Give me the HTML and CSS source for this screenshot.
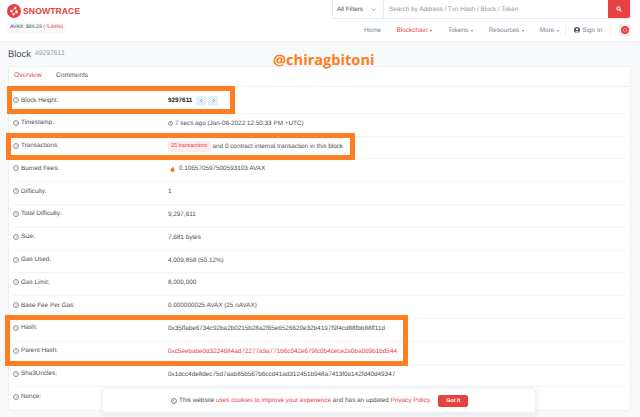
FILE: index.html
```html
<!DOCTYPE html>
<html lang="en">
<head>
<meta charset="utf-8">
<title>Block 9297611</title>
<link rel="stylesheet" href="styles.css">
</head>
<body>
<header class="top">
  <div class="brand">
    <div class="logo">
      <svg class="logo-mark" viewBox="0 0 16 16" width="14" height="14"><circle cx="8" cy="8" r="8" fill="#e84142"/><g fill="#fff"><circle cx="5" cy="8" r="1.5"/><circle cx="9.500" cy="4.500" r="1.300"/><circle cx="11" cy="9" r="1.500"/><circle cx="7.500" cy="12" r="1.200"/></g><path d="M5 8 9.500 4.500 11 9 7.500 12Z" fill="none" stroke="#fff" stroke-width=".7"/></svg>
      <span class="logo-text">SNOWTRACE</span>
    </div>
    <div class="price">AVAX: <b>$86.29</b> <span class="down">(-5.84%)</span></div>
  </div>
  <div class="top-right">
    <div class="search">
      <div class="filter"><span>All Filters</span><svg viewBox="0 0 8 8" width="5" height="5"><path d="M1 2.500 4 5.500 7 2.500" fill="none" stroke="#77838f" stroke-width="1.200"/></svg></div>
      <div class="query">Search by Address / Txn Hash / Block / Token</div>
      <div class="go"><svg viewBox="0 0 10 10" width="6" height="6"><circle cx="4" cy="4" r="2.700" fill="none" stroke="#fff" stroke-width="1.700"/><path d="M6 6 9 9" stroke="#fff" stroke-width="1.900"/></svg></div>
    </div>
    <nav class="nav">
      <span class="nav-item">Home</span>
      <span class="nav-item active">Blockchain<i class="caret"></i></span>
      <span class="nav-item">Tokens<i class="caret"></i></span>
      <span class="nav-item">Resources<i class="caret"></i></span>
      <span class="nav-item">More<i class="caret"></i></span>
      <span class="nav-sep"></span>
      <span class="nav-item sign"><svg viewBox="0 0 10 10" width="6" height="6"><circle cx="5" cy="5" r="5" fill="#4a5560"/><circle cx="5" cy="3.800" r="1.800" fill="#fff"/><path d="M1.800 8.300C2.500 6.500 7.500 6.500 8.200 8.300A5 5 0 0 1 1.800 8.300Z" fill="#fff"/></svg>Sign In</span>
      <span class="nav-sep"></span>
      <span class="chain"><svg viewBox="0 0 10 10" width="8" height="8"><circle cx="5" cy="5" r="5" fill="#e84142"/><circle cx="5" cy="5" r="2.200" fill="none" stroke="#f9b8b8" stroke-width=".7"/></svg></span>
    </nav>
  </div>
</header>

<main class="main">
  <div class="title-row">
    <h1 class="title">Block</h1><span class="block-no">#9297611</span>
    <span class="handle">@chiragbitoni</span>
  </div>
  <section class="card">
    <div class="tabs">
      <span class="tab on">Overview</span>
      <span class="tab">Comments</span>
    </div>
    <div class="rows">
      <div class="row"><div class="label"><i class="q">?</i>Block Height:</div><div class="value"><b class="bold">9297611</b><span class="pager"><svg viewBox="0 0 6 6" width="5" height="5"><path d="M3.800 1 1.800 3 3.800 5" fill="none" stroke="#3498db" stroke-width=".9"/></svg></span><span class="pager"><svg viewBox="0 0 6 6" width="5" height="5"><path d="M2.200 1 4.200 3 2.200 5" fill="none" stroke="#3498db" stroke-width=".9"/></svg></span></div></div>
      <div class="row"><div class="label"><i class="q">?</i>Timestamp:</div><div class="value"><svg class="clock" viewBox="0 0 10 10" width="5" height="5"><circle cx="5" cy="5" r="4" fill="none" stroke="#4a4f55" stroke-width="1.200"/><path d="M5 2.500V5L6.800 6" fill="none" stroke="#4a4f55"/></svg>7 secs ago (Jan-08-2022 12:50:33 PM +UTC)</div></div>
      <div class="row"><div class="label"><i class="q">?</i>Transactions:</div><div class="value"><span class="pill">25 transactions</span>and 0 contract internal transaction in this block</div></div>
      <div class="row"><div class="label"><i class="q">?</i>Burned Fees:</div><div class="value"><svg class="fire" viewBox="0 0 10 12" width="5" height="6"><path d="M5 0C6 3 9 4 9 8A4 4 0 0 1 1 8C1 6 2 5 3 4 3.500 5 4 5 4.500 5 5 3 4.500 1 5 0Z" fill="#f5702a"/></svg>0.106570597500593103 AVAX</div></div>
      <div class="row"><div class="label"><i class="q">?</i>Difficulty:</div><div class="value">1</div></div>
      <div class="row"><div class="label"><i class="q">?</i>Total Difficulty:</div><div class="value">9,297,611</div></div>
      <div class="row"><div class="label"><i class="q">?</i>Size:</div><div class="value">7,681 bytes</div></div>
      <div class="row"><div class="label"><i class="q">?</i>Gas Used:</div><div class="value">4,009,858 (50.12%)</div></div>
      <div class="row"><div class="label"><i class="q">?</i>Gas Limit:</div><div class="value">8,000,000</div></div>
      <div class="row"><div class="label"><i class="q">?</i>Base Fee Per Gas:</div><div class="value">0.000000025 AVAX (25 nAVAX)</div></div>
      <div class="row"><div class="label"><i class="q">?</i>Hash:</div><div class="value">0x35ffabe6734c92ba2b0215b28a2f65e6526620e32b4197f9f4cd88fbb88ff11d</div></div>
      <div class="row"><div class="label"><i class="q">?</i>Parent Hash:</div><div class="value link">0xc5eebabe0d3224684ad72277a9a771b6c042e679fc0b4cece2a0ba0d9b1bd544</div></div>
      <div class="row"><div class="label"><i class="q">?</i>Sha3Uncles:</div><div class="value">0x1dcc4de8dec75d7aab85b567b6ccd41ad312451b948a7413f0a142fd40d49347</div></div>
      <div class="row"><div class="label"><i class="q">?</i>Nonce:</div><div class="value"></div></div>
    </div>
  </section>
</main>

<div class="mark mark-a"></div>
<div class="mark mark-b"></div>
<div class="mark mark-c"></div>

<div class="cookie">
  <svg class="cookie-icon" viewBox="0 0 10 10" width="6" height="6"><circle cx="5" cy="5" r="4" fill="none" stroke="#4a4f55" stroke-width="1.200"/><circle cx="4" cy="4" r=".7" fill="#4a4f55"/><circle cx="6" cy="6" r=".7" fill="#4a4f55"/></svg>
  <span>This website <a class="red">uses cookies to improve your experience</a> and has an updated <a class="red">Privacy Policy.</a></span>
  <span class="got">Got It</span>
</div>
</body>
</html>
```

FILE: styles.css
```css
* { box-sizing: border-box; }
html, body { margin: 0; height: 417px; overflow: hidden; }
body { position: relative; background: #f8f9fb; font-family: "Liberation Sans", Arial, sans-serif; font-size: 6.35px; color: #4a4f55; text-rendering: geometricPrecision; }

.top { height: 41px; background: #fff; display: flex; justify-content: space-between; padding: 0 9px 0 7px; box-shadow: 0 1px 2px rgba(151,164,175,.12); }
.brand { padding-top: 4px; }
.logo { display: flex; align-items: center; gap: 2px; height: 14px; }
.logo-text { font-weight: 700; font-size: 8.6px; letter-spacing: .1px; color: #e84142; }
.price { display: inline-block; margin-top: 4px; padding: 2px 3px; background: #f8f9fa; border-radius: 2px; font-size: 5.2px; line-height: 7px; }
.price b { font-weight: 400; }
.down { color: #e84142; }

.top-right { width: 299px; display: flex; flex-direction: column; }
.search { height: 19px; display: flex; border: 1px solid #e7eaf3; border-top: 0; border-radius: 0 0 2px 2px; }
.filter { width: 51px; display: flex; align-items: center; justify-content: space-between; padding: 0 7px 0 4px; border-right: 1px solid #e7eaf3; font-size: 6.3px; }
.query { flex: 1; display: flex; align-items: center; padding-left: 5px; color: #8f98a3; font-size: 6.4px; }
.go { width: 22px; background: #e84142; display: flex; align-items: center; justify-content: center; border-radius: 0 0 2px 0; }

.nav { display: flex; align-items: center; height: 22px; color: #77838f; font-size: 6.4px; }
.nav-item { display: flex; align-items: center; margin-left: 15.500px; }
.nav-item:first-child { margin-left: 32px; }
.active { color: #e84142; }
.caret { width: 0; height: 0; margin: 1px 0 0 3px; border: 1.500px solid transparent; border-top: 2px solid currentColor; border-bottom: 0; }
.nav-sep { width: 1px; height: 9px; background: #eef0f4; margin-left: 6px; }
.sign { margin-left: 8px; gap: 2px; }
.sign + .nav-sep { margin-left: 8px; }
.chain { width: 12px; height: 12px; margin-left: auto; display: flex; align-items: center; justify-content: center; background: #fdecec; border-radius: 2px; }

.main { padding: 0 9px 0 8px; }
.title-row { height: 25px; display: flex; align-items: center; position: relative; }
.title { margin: 0; font-weight: 400; font-size: 9.4px; color: #4a4f55; }
.block-no { margin-left: 4px; font-size: 6.8px; color: #8c98a4; }
.handle { position: absolute; left: 265px; top: 9px; font-family: "Open Sans", sans-serif; font-weight: 700; font-size: 14.600px; line-height: 20px; color: #fd7e23; }

.card { background: #fff; border: 1px solid #eef0f4; border-radius: 3px; }
.tabs { height: 20px; display: flex; border-bottom: 1px solid #eef0f4; }
.tab { padding: 0 5px; display: flex; align-items: center; padding-bottom: 2px; font-size: 6.700px; color: #4a4f55; }
.tab.on { color: #e84142; border-bottom: 1px solid #e84142; height: 20px; margin-right: 4px; }

.rows { padding: 4px 5px 0 4px; }
.row { height: 22.800px; display: grid; grid-template-columns: 155px 1fr; align-items: center; border-bottom: 1px solid #f1f3f6; padding-bottom: 3.800px; }
.row:last-child { border-bottom: 0; }
.label { display: flex; align-items: center; gap: 2px; color: #4a4f55; }
.q { width: 6px; height: 6px; border: .5px solid #8c98a4; border-radius: 50%; font-style: normal; font-size: 4.500px; line-height: 5px; text-align: center; color: #8c98a4; }
.value { display: flex; align-items: center; padding-top: 1px; white-space: nowrap; }
.bold { font-weight: 700; color: #1e2022; }
.pager { width: 10px; height: 10px; margin-left: 2px; background: #e3effa; border-radius: 2px; display: flex; align-items: center; justify-content: center; }
.bold + .pager { margin-left: 4px; }
.clock { margin-right: 2px; }
.fire { margin: 0 4px 0 2px; }
.pill { margin-right: 2px; padding: 0 3px; height: 11px; display: flex; align-items: center; background: #fdeaea; border-radius: 2px; color: #e84142; font-size: 5.400px; }
.link { color: #e84142; }

.mark { position: absolute; border: 5px solid #fd7e23; }
.mark-a { left: 7px; top: 86px; width: 228px; height: 28px; }
.mark-b { left: 6px; top: 133px; width: 349px; height: 27px; }
.mark-c { left: 5px; top: 315px; width: 403px; height: 51px; }

.cookie { position: absolute; left: 102px; top: 388px; width: 434px; height: 25px; display: flex; align-items: center; padding-left: 68px; gap: 2px; background: #fff; border: 1px solid #eef0f4; border-radius: 3px; box-shadow: 0 2px 6px rgba(151,164,175,.2); }
.red { color: #e84142; }
.got { margin-left: 5px; width: 30px; height: 12px; display: flex; align-items: center; justify-content: center; background: #e84142; color: #fff; border-radius: 2px; font-size: 5.400px; font-weight: 700; }
```
